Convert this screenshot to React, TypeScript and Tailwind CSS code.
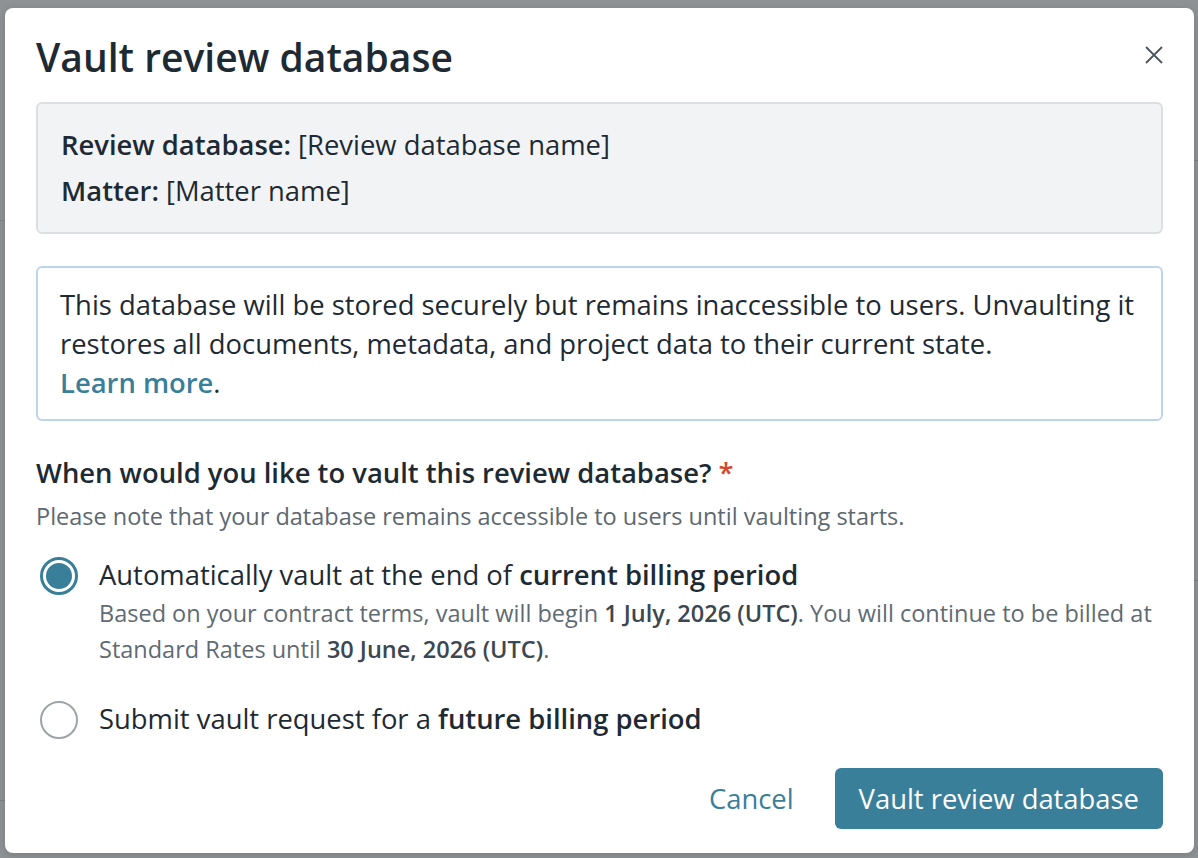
import { useState } from 'react'

type VaultOption = {
    id: string
    label: React.ReactNode
    detail?: React.ReactNode
}

function Radio({ checked }: { checked: boolean }) {
    if (checked) {
        return (
            <span className="flex h-[38px] w-[38px] shrink-0 items-center justify-center rounded-full border-[3px] border-[#3a7f9a] bg-white">
                <span className="h-[26px] w-[26px] rounded-full bg-[#3a7f9a]" />
            </span>
        )
    }
    return <span className="block h-[38px] w-[38px] shrink-0 rounded-full border-2 border-[#9ea3a7] bg-white" />
}

export default function App() {
    const [choice, setChoice] = useState('current')

    const options: VaultOption[] = [
        {
            id: 'current',
            label: (
                <>
                    Automatically vault at the end of <b className="font-semibold">current billing period</b>
                </>
            ),
            detail: (
                <>
                    Based on your contract terms, vault will begin{' '}
                    <b className="font-semibold text-[#3c4750]">1 July, 2026 (UTC)</b>. You will continue to be billed at
                    Standard Rates until <b className="font-semibold text-[#3c4750]">30 June, 2026 (UTC)</b>.
                </>
            ),
        },
        {
            id: 'future',
            label: (
                <>
                    Submit vault request for a <b className="font-semibold">future billing period</b>
                </>
            ),
        },
    ]

    return (
        <div
            className="relative h-[858px] w-[1198px] overflow-hidden bg-[#8f9295] pt-[8px] pl-[5px] pr-[4px] text-[#1e2a33]"
            style={{ fontFamily: '"Open Sans", "Noto Sans", sans-serif' }}>
            {/* page behind the overlay */}
            <div className="absolute right-0 top-[160px] h-px w-[4px] bg-[#7d8184]" />
            <div className="absolute right-0 top-[580px] h-px w-[4px] bg-[#7d8184]" />
            <div className="absolute left-0 top-[220px] h-px w-[5px] bg-[#7d8184]" />
            <div className="absolute left-0 top-[800px] h-px w-[5px] bg-[#7d8184]" />

            {/* dialog */}
            <div className="relative h-[845px] rounded-lg bg-white px-[31px] pt-[24px] shadow-[0_2px_8px_rgba(0,0,0,0.15)]">
                <h1 className="text-[39px] font-semibold leading-[50px]">Vault review database</h1>
                <button type="button" className="absolute right-[30px] top-[37px] text-[#4b555c]">
                    <svg width="20" height="20" viewBox="0 0 20 20" fill="none" stroke="currentColor" strokeWidth="1.8">
                        <path d="M2 2 L18 18 M18 2 L2 18" />
                    </svg>
                </button>

                <div className="mt-[20px] rounded-md border-2 border-[#dcdfe2] bg-[#f2f3f5] px-[23px] py-[18px] text-[27.4px] leading-[46px]">
                    <p>
                        <span className="font-semibold">Review database:</span> [Review database name]
                    </p>
                    <p>
                        <span className="font-semibold">Matter:</span> [Matter name]
                    </p>
                </div>

                <div className="mt-[32px] rounded-md border-2 border-[#bcd3f1] px-[22px] py-[17px] text-[27.4px] leading-[39px]">
                    This database will be stored securely but remains inaccessible to users. Unvaulting it restores all
                    documents, metadata, and project data to their current state.{' '}
                    <br />
                    <a href="#" className="font-semibold text-[#3a7f9a]">
                        Learn more
                    </a>
                    .
                </div>

                <h2 className="mt-[34px] text-[27.4px] font-semibold leading-[36px]">
                    When would you like to vault this review database? <span className="text-[#d3472a]">*</span>
                </h2>
                <p className="mt-[9px] text-[23.5px] leading-[32px] text-[#5d6870]">
                    Please note that your database remains accessible to users until vaulting starts.
                </p>

                <div className="mt-[24px] flex flex-col gap-[33px]">
                    {options.map(option => (
                        <label key={option.id} className="flex cursor-pointer gap-[21px]" onClick={() => setChoice(option.id)}>
                            <span className="pl-[4px] pt-[1px]">
                                <Radio checked={choice === option.id} />
                            </span>
                            <span className="flex flex-col">
                                <span className="text-[27.4px] leading-[38px]">{option.label}</span>
                                {option.detail && (
                                    <span className="mt-[1px] text-[23.5px] leading-[36px] text-[#5f6b73]">{option.detail}</span>
                                )}
                            </span>
                        </label>
                    ))}
                </div>

                <div className="mt-[29px] flex items-center justify-end gap-[41px]">
                    <button type="button" className="text-[27.4px] text-[#3a7f9a]">
                        Cancel
                    </button>
                    <button type="button" className="h-[61px] rounded-md bg-[#3a7f9a] px-[24px] text-[27.4px] text-white">
                        Vault review database
                    </button>
                </div>
            </div>
        </div>
    )
}
